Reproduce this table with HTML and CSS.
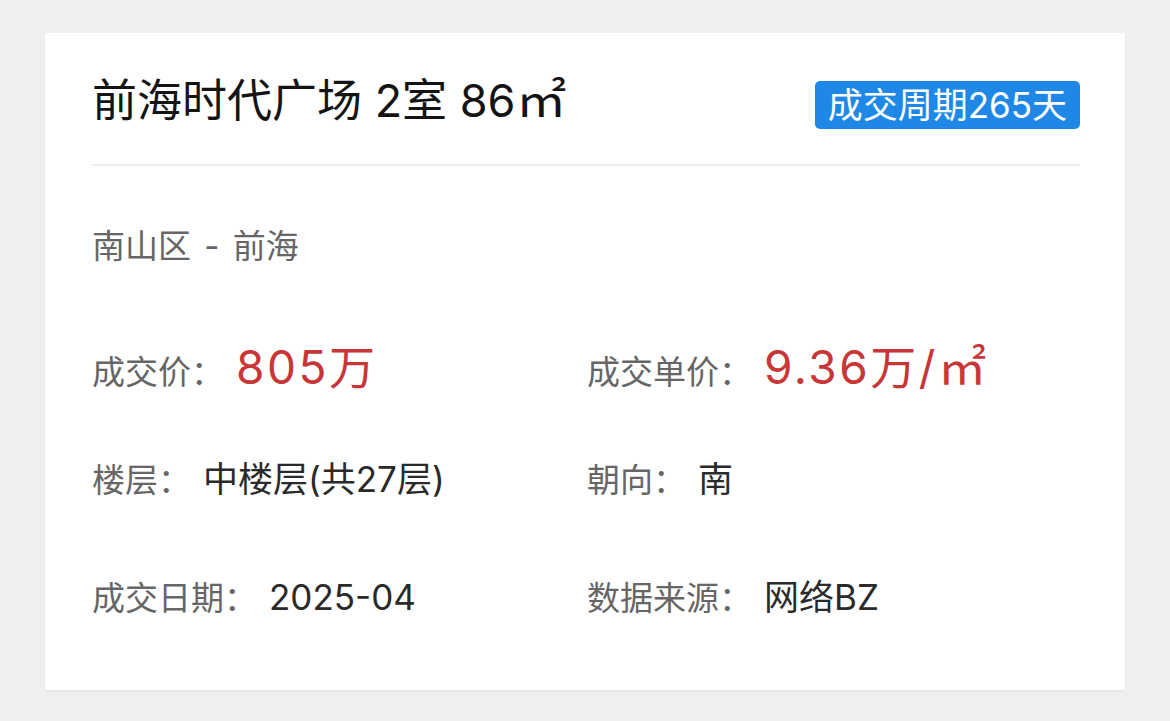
FILE: index.html
```html
<!DOCTYPE html>
<html lang="zh-CN">
<head>
<meta charset="utf-8">
<title>前海时代广场 2室 86㎡</title>
<link rel="stylesheet" href="styles.css">
</head>
<body>
<div class="card">
  <div class="head">
    <div class="title">前海时代广场 2室 86<span class="sqm">㎡</span></div>
    <div class="badge">成交周期265天</div>
  </div>
  <div class="info">
    <div class="district">南山区 - 前海</div>
    <div class="grid">
      <div class="item"><span class="label">成交价：</span><span class="price">805万</span></div>
      <div class="item"><span class="label">成交单价：</span><span class="price">9.36万/<span class="sqm sqm-small">㎡</span></span></div>
      <div class="item"><span class="label">楼层：</span><span class="value">中楼层(共27层)</span></div>
      <div class="item"><span class="label">朝向：</span><span class="value">南</span></div>
      <div class="item"><span class="label">成交日期：</span><span class="value">2025-04</span></div>
      <div class="item"><span class="label">数据来源：</span><span class="value">网络BZ</span></div>
    </div>
  </div>
</div>
</body>
</html>
```

FILE: styles.css
```css
html, body {
  margin: 0;
  padding: 0;
}
body {
  background: #efefef;
  font-family: "Inter", "Noto Sans CJK SC", sans-serif;
  width: 1170px;
  height: 721px;
  overflow: hidden;
}
.card {
  margin: 33px 0 0 45px;
  width: 1080px;
  height: 657px;
  box-sizing: border-box;
  padding: 0 45px 0 47px;
  background: #ffffff;
  border-radius: 2px;
  box-shadow: 0 3px 3px rgba(0, 0, 0, 0.03);
}
.head {
  display: flex;
  justify-content: space-between;
  align-items: flex-start;
  height: 133px;
  padding-top: 40px;
  box-sizing: border-box;
  border-bottom: 2px solid #eeeeee;
}
.title {
  font-size: 45px;
  line-height: 56px;
  color: #141414;
  white-space: nowrap;
}
.sqm {
  display: inline-block;
  transform: scaleX(1.12);
  transform-origin: left center;
  margin-right: 6px;
}
.sqm-small {
  transform: scaleX(1.05);
  margin-right: 0;
}
.badge {
  margin-top: 8px;
  background: #1f88e6;
  color: #ffffff;
  font-size: 35px;
  line-height: 48px;
  height: 48px;
  padding: 0 13px;
  border-radius: 5px;
  white-space: nowrap;
}
.info {
  padding-top: 58px;
}
.district {
  font-size: 33px;
  line-height: 44px;
  color: #666666;
  word-spacing: 4px;
  margin-bottom: 45px;
}
.grid {
  display: grid;
  grid-template-columns: 495px 1fr;
  grid-template-rows: 107px 119px 117px;
  align-items: center;
}
.item {
  display: flex;
  align-items: baseline;
  white-space: nowrap;
}
.label {
  font-size: 33px;
  line-height: 44px;
  color: #666666;
  margin-right: 12px;
}
.value {
  font-size: 35px;
  line-height: 44px;
  color: #2a2a2a;
}
.price {
  font-size: 46px;
  line-height: 56px;
  color: #c83637;
  letter-spacing: 2.5px;
}
```
